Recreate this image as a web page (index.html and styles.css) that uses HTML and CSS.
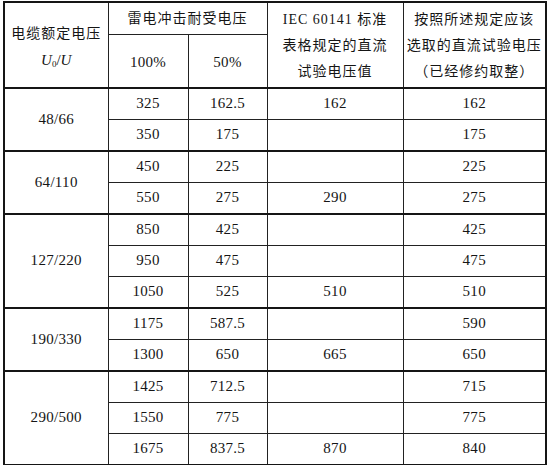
FILE: index.html
```html
<!DOCTYPE html>
<html lang="zh">
<head>
<meta charset="utf-8">
<link rel="stylesheet" href="styles.css">
</head>
<body>
<table class="grid">
  <colgroup>
    <col class="c1"><col class="c2"><col class="c3"><col class="c4"><col class="c5">
  </colgroup>
  <thead>
    <tr class="h1">
      <th rowspan="2" class="cjk first">电缆额定电压<br><span class="uu"><i>U</i><sub>0</sub>/<i>U</i></span></th>
      <th colspan="2" class="cjk">雷电冲击耐受电压</th>
      <th rowspan="2" class="cjk tall">IEC 60141 标准<br>表格规定的直流<br>试验电压值</th>
      <th rowspan="2" class="cjk tall">按照所述规定应该<br>选取的直流试验电压<br>（已经修约取整）</th>
    </tr>
    <tr class="h2">
      <th>100%</th>
      <th>50%</th>
    </tr>
  </thead>
  <tbody>
    <tr class="grp"><td rowspan="2">48/66</td><td>325</td><td>162.5</td><td>162</td><td>162</td></tr>
    <tr><td>350</td><td>175</td><td></td><td>175</td></tr>
    <tr class="grp"><td rowspan="2">64/110</td><td>450</td><td>225</td><td></td><td>225</td></tr>
    <tr><td>550</td><td>275</td><td>290</td><td>275</td></tr>
    <tr class="grp"><td rowspan="3">127/220</td><td>850</td><td>425</td><td></td><td>425</td></tr>
    <tr><td>950</td><td>475</td><td></td><td>475</td></tr>
    <tr><td>1050</td><td>525</td><td>510</td><td>510</td></tr>
    <tr class="grp"><td rowspan="2">190/330</td><td>1175</td><td>587.5</td><td></td><td>590</td></tr>
    <tr><td>1300</td><td>650</td><td>665</td><td>650</td></tr>
    <tr class="grp"><td rowspan="3">290/500</td><td>1425</td><td>712.5</td><td></td><td>715</td></tr>
    <tr><td>1550</td><td>775</td><td></td><td>775</td></tr>
    <tr><td>1675</td><td>837.5</td><td>870</td><td>840</td></tr>
  </tbody>
</table>
</body>
</html>
```
FILE: styles.css
```css
html, body {
  margin: 0;
  padding: 0;
  background: #ffffff;
}
body {
  padding: 1px 0 0 3px;
  font-family: "Liberation Serif", "Noto Sans CJK SC", serif;
  color: #151515;
}
.grid {
  border-collapse: collapse;
  table-layout: fixed;
  width: 542px;
  border: 2px solid #151515;
}
.c1 { width: 104px; }
.c2 { width: 80px; }
.c3 { width: 79px; }
.c4 { width: 136px; }
.c5 { width: 143px; }
th, td {
  border: 1px solid #222;
  padding: 0;
  text-align: center;
  vertical-align: middle;
  font-weight: normal;
  font-size: 15px;
  letter-spacing: 0.3px;
}
.cjk {
  font-family: "Liberation Serif", "Noto Sans CJK SC", serif;
  font-size: 14px;
  letter-spacing: 1px;
  line-height: 27px;
}
.first {
  padding-top: 8px;
}
.tall {
  line-height: 26px;
  padding-top: 3px;
}
.uu {
  font-size: 15px;
  letter-spacing: 0;
}
.uu sub {
  font-size: 9px;
  vertical-align: -2px;
}
.h1 th { height: 31px; }
.h2 th { height: 53px; padding-top: 4px; box-sizing: border-box; }
thead tr.h2 th, thead tr.h1 th[rowspan] { border-bottom: 2px solid #151515; }
tbody td { height: 30px; }
tbody tr.grp td { border-top: 2px solid #151515; }
```
